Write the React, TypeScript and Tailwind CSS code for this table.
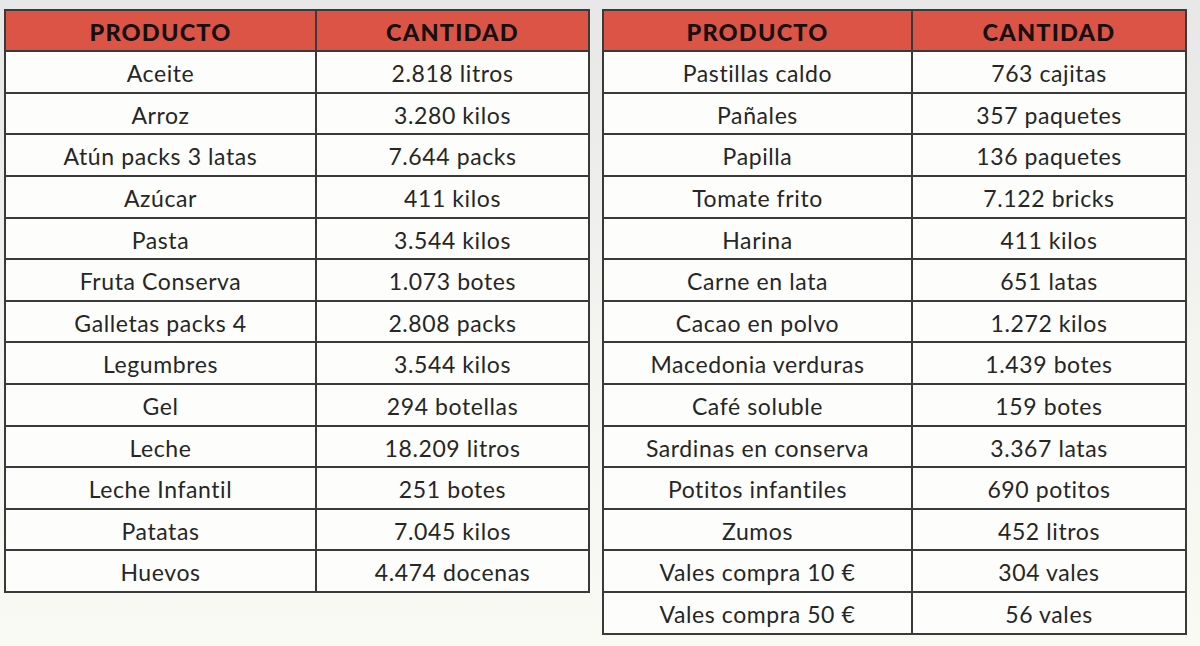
const left: [string, string][] = [
  ["Aceite", "2.818 litros"],
  ["Arroz", "3.280 kilos"],
  ["Atún packs 3 latas", "7.644 packs"],
  ["Azúcar", "411 kilos"],
  ["Pasta", "3.544 kilos"],
  ["Fruta Conserva", "1.073 botes"],
  ["Galletas packs 4", "2.808 packs"],
  ["Legumbres", "3.544 kilos"],
  ["Gel", "294 botellas"],
  ["Leche", "18.209 litros"],
  ["Leche Infantil", "251 botes"],
  ["Patatas", "7.045 kilos"],
  ["Huevos", "4.474 docenas"],
];

const right: [string, string][] = [
  ["Pastillas caldo", "763 cajitas"],
  ["Pañales", "357 paquetes"],
  ["Papilla", "136 paquetes"],
  ["Tomate frito", "7.122 bricks"],
  ["Harina", "411 kilos"],
  ["Carne en lata", "651 latas"],
  ["Cacao en polvo", "1.272 kilos"],
  ["Macedonia verduras", "1.439 botes"],
  ["Café soluble", "159 botes"],
  ["Sardinas en conserva", "3.367 latas"],
  ["Potitos infantiles", "690 potitos"],
  ["Zumos", "452 litros"],
  ["Vales compra 10 €", "304 vales"],
  ["Vales compra 50 €", "56 vales"],
];

function Tabla({ rows, col1 }: { rows: [string, string][]; col1: string }) {
  return (
    <table className="w-full table-fixed border-collapse border-2 border-[#3a3a3a]">
      <colgroup>
        <col className={col1} />
        <col />
      </colgroup>
      <thead>
        <tr className="h-[41px] bg-[#dc5446]">
          <th className="border-2 border-[#3a3a3a] pt-[4px] text-[23.5px] font-black text-[#161010] tracking-[1.2px]">
            PRODUCTO
          </th>
          <th className="border-2 border-[#3a3a3a] pt-[4px] text-[23.5px] font-black text-[#161010] tracking-[1.2px]">
            CANTIDAD
          </th>
        </tr>
      </thead>
      <tbody className="bg-[#fdfdfb]">
        {rows.map(([p, c]) => (
          <tr key={p} className="h-[41.6px]">
            <td className="border-2 border-[#3a3a3a] pt-[3px] text-center text-[23px] tracking-[0.6px] text-[#262626]">{p}</td>
            <td className="border-2 border-[#3a3a3a] pt-[3px] text-center text-[23px] tracking-[0.6px] text-[#262626]">{c}</td>
          </tr>
        ))}
      </tbody>
    </table>
  );
}

export default function App() {
  return (
    <div
      className="flex h-[646px] w-[1200px] items-start gap-[12px] bg-gradient-to-b from-[#e7e7e7] via-[#f3f3f0] to-[#fafaf4] pl-[4px] pt-[9px]"
      style={{ fontFamily: "Lato, 'Liberation Sans', sans-serif" }}
    >
      <div className="w-[586px]">
        <Tabla rows={left} col1="w-[311px]" />
      </div>
      <div className="w-[585px]">
        <Tabla rows={right} col1="w-[309px]" />
      </div>
    </div>
  );
}
